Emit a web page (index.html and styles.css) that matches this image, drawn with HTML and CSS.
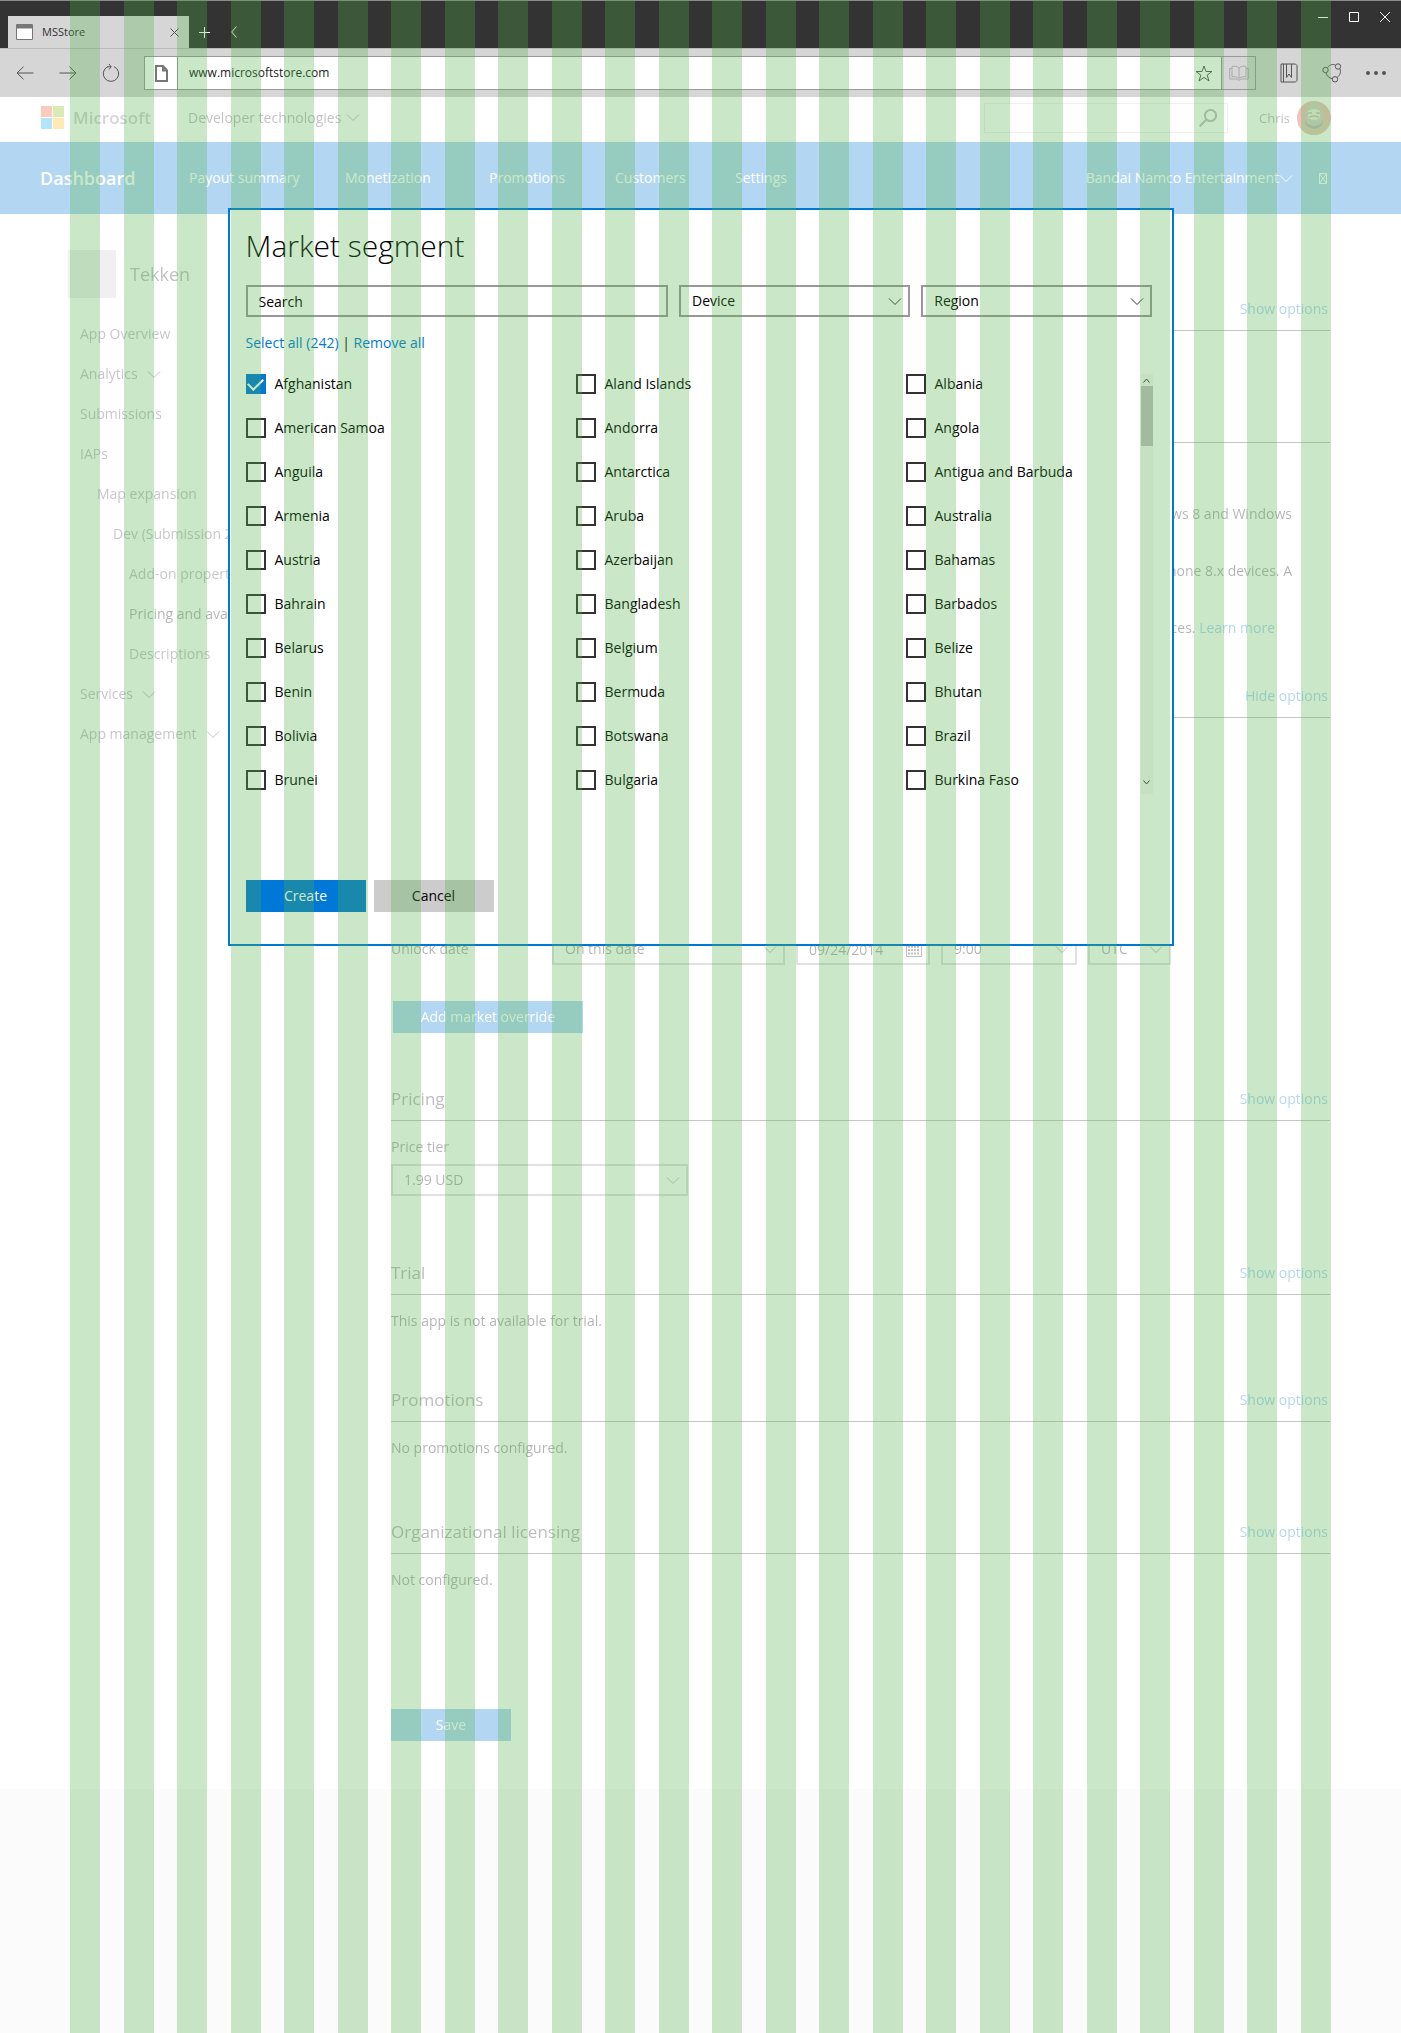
FILE: index.html
```html
<!DOCTYPE html>
<html lang="en">
<head>
<meta charset="utf-8">
<meta name="viewport" content="width=device-width, initial-scale=1">
<title>MSStore</title>
<link rel="stylesheet" href="styles.css">
</head>
<body>
<svg class="defs" aria-hidden="true">
  <symbol id="chevron" viewBox="0 0 14 9"><path d="M1 1.500l6 6 6-6"/></symbol>
</svg>

<div class="browser">
  <div class="titlebar">
    <div class="tab">
      <svg class="tab-icon" viewBox="0 0 17 16"><path d="M.5.5h16v15H.5z" fill="#fff" stroke="#777"/><path d="M1 1h15v3.500H1z" fill="#777"/></svg>
      <span class="tab-title">MSStore</span>
      <button class="icon-btn tab-close" aria-label="Close tab"><svg width="9" height="9" viewBox="0 0 9 9"><path d="M.5.5l8 8M8.500.5l-8 8"/></svg></button>
    </div>
    <button class="icon-btn light" aria-label="New tab"><svg width="11" height="11" viewBox="0 0 11 11"><path d="M5.500 0v11M0 5.500h11"/></svg></button>
    <button class="icon-btn light" aria-label="Previous tabs"><svg width="6" height="12" viewBox="0 0 6 12"><path d="M5.500.5L.7 6l4.800 5.500"/></svg></button>
    <div class="window-controls">
      <button class="icon-btn light" aria-label="Minimize"><svg width="10" height="10" viewBox="0 0 10 10"><path d="M0 5.500h10"/></svg></button>
      <button class="icon-btn light" aria-label="Maximize"><svg width="10" height="10" viewBox="0 0 10 10"><path d="M.5.5h9v9h-9z"/></svg></button>
      <button class="icon-btn light" aria-label="Close"><svg width="10" height="10" viewBox="0 0 10 10"><path d="M0 0l10 10M10 0L0 10"/></svg></button>
    </div>
  </div>
  <div class="toolbar">
    <div class="history">
      <button class="icon-btn" aria-label="Back"><svg width="18" height="14" viewBox="0 0 18 14"><path d="M17.500 7H1M7.500.7L1 7l6.500 6.300"/></svg></button>
      <button class="icon-btn" aria-label="Forward"><svg width="18" height="14" viewBox="0 0 18 14"><path d="M.5 7H17M10.500.7L17 7l-6.500 6.300"/></svg></button>
      <button class="icon-btn" aria-label="Refresh"><svg width="18" height="18" viewBox="0 0 18 18"><path d="M5.500 2.800A7.700 7.700 0 1 0 12 2.600M5 2.800h4M7 0l2.200 2.800L7 5.500"/></svg></button>
    </div>
    <div class="address">
      <span class="doc"><svg width="13" height="17" viewBox="0 0 13 17"><path d="M1 1h7l4 4.500V16H1zM8 1v4.500h4"/></svg></span>
      <input class="url" type="text" value="www.microsoftstore.com" aria-label="Address">
      <button class="icon-btn star" aria-label="Add to favorites"><svg width="18" height="17" viewBox="0 0 18 17"><path d="M9 1l2 5.500h6l-4.800 3.600L14 16l-5-3.600L4 16l1.800-5.900L1 6.500h6z"/></svg></button>
      <button class="icon-btn reading" aria-label="Reading view"><svg width="20" height="16" viewBox="0 0 20 16"><path d="M10 3C8 1 5 1 3 1.500V12c2-.6 5-.5 7 1.500 2-2 5-2.100 7-1.500V1.500C15 1 12 1 10 3zM10 3v10M3 3.500H.7V14H8l2 1.300 2-1.300h7.300V3.500H17"/></svg></button>
    </div>
    <div class="tools">
      <button class="icon-btn" aria-label="Hub"><svg width="18" height="20" viewBox="0 0 18 20"><path d="M1 1h14.500L17 2.500v15L15.500 19H1zM3.500 1v18M6.500 1v13.500L9 11l2.500 3.500V1"/></svg></button>
      <button class="icon-btn" aria-label="Share"><svg width="20" height="20" viewBox="0 0 20 20"><circle cx="3.500" cy="7" r="2.700"/><circle cx="16" cy="3.500" r="2.700"/><circle cx="13" cy="16.300" r="2.700"/><path d="M5.500 4.500C8 1.500 10.500 1 13.300 2M18 6c1 3 .4 6-2.700 8.300M4 9.700c.7 3.300 3 5.300 6.300 6"/></svg></button>
      <button class="icon-btn" aria-label="More"><svg width="20" height="4" viewBox="0 0 20 4"><g fill="#555" stroke="none"><circle cx="2" cy="2" r="2"/><circle cx="10" cy="2" r="2"/><circle cx="18" cy="2" r="2"/></g></svg></button>
    </div>
  </div>
</div>

<div class="page">
  <header class="site-header">
    <svg class="logo" viewBox="0 0 23 23"><path d="M0 0h11v11H0z" fill="#f25022"/><path d="M12 0h11v11H12z" fill="#7fba00"/><path d="M0 12h11v11H0z" fill="#00a4ef"/><path d="M12 12h11v11H12z" fill="#ffb900"/></svg>
    <span class="brand">Microsoft</span>
    <a class="site-menu" href="#">Developer technologies<svg class="chev"><use href="#chevron"/></svg></a>
    <div class="site-search">
      <input type="search" aria-label="Search site">
      <svg width="18" height="18" viewBox="0 0 18 18"><circle cx="11.500" cy="6.500" r="5.600"/><path d="M7.500 10.500L.6 17.400"/></svg>
    </div>
    <span class="user">Chris</span>
    <svg class="avatar" viewBox="0 0 34 34"><circle cx="17" cy="17" r="17" fill="#d8352a"/><path d="M1 23c3-2 5-3 8-4l16 0c3 1 5 2 8 4-3 7-9 11-16 11S4 30 1 23z" fill="#a8501c"/><path d="M8 19q0 8 9 9 9-1 9-9z" fill="#2c1c14"/><path d="M9 10C11 6 13 3 17 0c4 3 6 6 8 10l1 8c-1 5-5 7-9 7S9 23 8 18z" fill="#75694f"/><path d="M11 10q6-4 12 0l0 7q-6 4-12 0z" fill="#d3c3a2"/><path d="M11 12h4M19 12h4M12 16.500q5-3 10 0" stroke="#43382c" stroke-width="1.500"/></svg>
  </header>

  <nav class="main-nav">
    <a class="nav-title" href="#">Dashboard</a>
    <a href="#">Payout summary</a>
    <a href="#">Monetization</a>
    <a href="#">Promotions</a>
    <a href="#">Customers</a>
    <a href="#">Settings</a>
    <a class="account" href="#">Bandai Namco Entertainment<svg class="chev"><use href="#chevron"/></svg></a>
    <button class="icon-btn flag" aria-label="Notifications"><svg width="8" height="11" viewBox="0 0 8 11"><path d="M.5.5h7v10h-7zM.5.500l7 10M7.500.5l-7 10"/></svg></button>
  </nav>

  <div class="body">
    <aside class="sidebar">
      <div class="app"><span class="app-icon"></span><span class="app-name">Tekken</span></div>
      <a href="#">App Overview</a>
      <a href="#">Analytics<svg class="chev"><use href="#chevron"/></svg></a>
      <a href="#">Submissions</a>
      <a href="#">IAPs</a>
      <a class="lvl1" href="#">Map expansion</a>
      <a class="lvl2" href="#">Dev (Submission 2)</a>
      <a class="lvl3" href="#">Add-on properties</a>
      <a class="lvl3 current" href="#">Pricing and availability</a>
      <a class="lvl3" href="#">Descriptions</a>
      <a href="#">Services<svg class="chev"><use href="#chevron"/></svg></a>
      <a href="#">App management<svg class="chev"><use href="#chevron"/></svg></a>
    </aside>

    <main class="content">
      <div class="head"><a href="#">Show options</a></div>
      <div class="head second"></div>
      <div class="notes">
        <p>Windows 8 and Windows</p>
        <p>Phone 8.x devices. A</p>
        <p class="short">devices. <a href="#">Learn more</a></p>
      </div>
      <div class="head"><a href="#">Hide options</a></div>

      <div class="unlock">
        <label for="unlock">Unlock date</label>
        <div class="select when"><select id="unlock"><option>On this date</option></select><svg class="chev"><use href="#chevron"/></svg></div>
        <div class="select date"><input type="text" value="09/24/2014" aria-label="Date"><svg class="calendar" viewBox="0 0 16 16"><path d="M.5.5h15v15H.5zM0 2.500h16"/><path d="M2 6h12M2 9h12M2 12.500h12" stroke-width="2" stroke-dasharray="2 1"/></svg></div>
        <div class="select time"><select aria-label="Time"><option>9:00</option></select><svg class="chev"><use href="#chevron"/></svg></div>
        <div class="select zone"><select aria-label="Time zone"><option>UTC</option></select><svg class="chev"><use href="#chevron"/></svg></div>
      </div>
      <button class="btn primary override">Add market override</button>

      <section class="pricing">
        <div class="head"><h2>Pricing</h2><a href="#">Show options</a></div>
        <label for="tier">Price tier</label>
        <div class="select tier"><select id="tier"><option>1.99 USD</option></select><svg class="chev"><use href="#chevron"/></svg></div>
      </section>
      <section>
        <div class="head"><h2>Trial</h2><a href="#">Show options</a></div>
        <p>This app is not available for trial.</p>
      </section>
      <section>
        <div class="head"><h2>Promotions</h2><a href="#">Show options</a></div>
        <p>No promotions configured.</p>
      </section>
      <section class="licensing">
        <div class="head"><h2>Organizational licensing</h2><a href="#">Show options</a></div>
        <p>Not configured.</p>
      </section>
      <button class="btn primary save">Save</button>
    </main>
  </div>
  <footer class="footer"></footer>
</div>

<div class="dialog" role="dialog" aria-labelledby="dialog-title">
  <h1 id="dialog-title">Market segment</h1>
  <div class="filters">
    <div class="select"><input type="text" value="Search" aria-label="Search markets"></div>
    <div class="select"><select aria-label="Device"><option>Device</option></select><svg class="chev"><use href="#chevron"/></svg></div>
    <div class="select"><select aria-label="Region"><option>Region</option></select><svg class="chev"><use href="#chevron"/></svg></div>
  </div>
  <div class="bulk"><a href="#">Select all (242)</a> | <a href="#">Remove all</a></div>
  <div class="list">
    <div class="markets">
      <label><input type="checkbox" checked>Afghanistan</label>
      <label><input type="checkbox">Aland Islands</label>
      <label><input type="checkbox">Albania</label>
      <label><input type="checkbox">American Samoa</label>
      <label><input type="checkbox">Andorra</label>
      <label><input type="checkbox">Angola</label>
      <label><input type="checkbox">Anguila</label>
      <label><input type="checkbox">Antarctica</label>
      <label><input type="checkbox">Antigua and Barbuda</label>
      <label><input type="checkbox">Armenia</label>
      <label><input type="checkbox">Aruba</label>
      <label><input type="checkbox">Australia</label>
      <label><input type="checkbox">Austria</label>
      <label><input type="checkbox">Azerbaijan</label>
      <label><input type="checkbox">Bahamas</label>
      <label><input type="checkbox">Bahrain</label>
      <label><input type="checkbox">Bangladesh</label>
      <label><input type="checkbox">Barbados</label>
      <label><input type="checkbox">Belarus</label>
      <label><input type="checkbox">Belgium</label>
      <label><input type="checkbox">Belize</label>
      <label><input type="checkbox">Benin</label>
      <label><input type="checkbox">Bermuda</label>
      <label><input type="checkbox">Bhutan</label>
      <label><input type="checkbox">Bolivia</label>
      <label><input type="checkbox">Botswana</label>
      <label><input type="checkbox">Brazil</label>
      <label><input type="checkbox">Brunei</label>
      <label><input type="checkbox">Bulgaria</label>
      <label><input type="checkbox">Burkina Faso</label>
    </div>
    <div class="scrollbar">
      <svg class="arrow" viewBox="0 0 7 5"><path d="M.5 4.500l3-3.500 3 3.500"/></svg>
      <div class="thumb"></div>
      <svg class="arrow down" viewBox="0 0 7 5"><path d="M.5.5l3 3.500 3-3.500"/></svg>
    </div>
  </div>
  <div class="actions">
    <button class="btn primary">Create</button>
    <button class="btn">Cancel</button>
  </div>
</div>

<div class="columns" aria-hidden="true">
  <i></i><i></i><i></i><i></i><i></i><i></i><i></i><i></i><i></i><i></i><i></i><i></i>
  <i></i><i></i><i></i><i></i><i></i><i></i><i></i><i></i><i></i><i></i><i></i><i></i>
</div>
</body>
</html>
```
FILE: styles.css
```css
* { box-sizing: border-box; }

body {
  position: relative;
  display: flex;
  flex-direction: column;
  min-height: 100vh;
  margin: 0;
  background: #fff;
  color: #000;
  font: 14px/20px "Open Sans", "Noto Sans", sans-serif;
}

h1, h2, p { margin: 0; font-weight: 400; }
a { color: #0078d7; text-decoration: none; }
svg { flex: none; fill: none; stroke: #333; }
input, select, button { font: inherit; color: inherit; margin: 0; border-radius: 0; }
.defs { position: absolute; width: 0; height: 0; }
.chev { width: 14px; height: 9px; }

.icon-btn {
  display: flex;
  align-items: center;
  justify-content: center;
  padding: 0;
  border: 0;
  background: none;
}
.icon-btn svg { stroke: #555; }
.icon-btn.light svg { stroke: #fff; }

/* Browser window */
.titlebar {
  display: flex;
  height: 48px;
  padding-left: 8px;
  border-top: 1px solid #8a8a8a;
  background: #333;
}
.tab {
  display: flex;
  align-items: center;
  width: 181px;
  height: 32px;
  margin-top: 15px;
  padding: 0 10px 0 8px;
  background: #d6d6d6;
}
.tab-icon { width: 17px; height: 16px; stroke: none; }
.tab-title { margin-left: 9px; font-size: 11px; color: #333; }
.tab-close { margin-left: auto; }
.titlebar > .icon-btn { width: 30px; height: 32px; margin-top: 15px; }
.window-controls { display: flex; gap: 21px; height: 32px; margin-left: auto; padding-right: 11px; }

.toolbar {
  display: flex;
  align-items: center;
  height: 49px;
  padding-right: 15px;
  border-top: 1px solid #bbb;
  background: #d6d6d6;
}
.history { display: flex; align-items: center; gap: 25px; width: 144px; padding-left: 16px; }
.address { display: flex; flex: 1; height: 34px; border: 1px solid #999; background: #fff; }
.doc { display: grid; place-items: center; width: 33px; border-right: 1px solid #999; }
.doc svg { stroke: #777; stroke-width: 2; }
.url { flex: 1; min-width: 0; padding: 0 11px; border: 0; background: none; font-size: 12px; color: #222; }
.star { width: 34px; }
.reading { width: 34px; border-left: 1px solid #999; background: #d6d6d6; }
.reading svg { stroke: #aaa; }
.tools { display: flex; align-items: center; justify-content: space-between; width: 130px; padding-left: 24px; }

/* Page behind the dialog */
.page { display: flex; flex: 1; flex-direction: column; opacity: .3; }

.site-header { display: flex; align-items: center; height: 45px; padding: 0 70px 4px 41px; }
.logo { width: 23px; height: 23px; stroke: none; }
.brand { width: 115px; margin-left: 9px; font-size: 17px; font-weight: 600; color: #737373; }
.site-menu { display: flex; align-items: center; gap: 5px; color: #333; }
.site-search {
  display: flex;
  align-items: center;
  width: 244px;
  height: 30px;
  margin-left: auto;
  padding-right: 10px;
  border: 1px solid #ccc;
}
.site-search input { flex: 1; min-width: 0; border: 0; background: none; outline: 0; }
.site-search svg { stroke-width: 2; }
.user { width: 38px; margin-left: 31px; font-size: 13px; color: #333; }
.avatar { width: 34px; height: 34px; stroke: none; }

.main-nav {
  display: grid;
  grid-template-columns: 149px 156px 144px 126px 120px 80px 1fr 34px;
  align-items: center;
  height: 72px;
  padding: 0 74px 0 40px;
  background: #0078d7;
}
.main-nav a { color: #fff; }
.main-nav .nav-title { font-size: 18px; font-weight: 600; }
.account { display: flex; align-items: center; justify-content: flex-end; }
.main-nav svg { stroke: #fff; }
.main-nav .flag { justify-content: flex-end; }

.body { display: grid; grid-template-columns: 323px 1fr; padding: 0 71px 48px 68px; }

.sidebar { padding-top: 36px; }
.app { display: flex; align-items: center; gap: 14px; margin-bottom: 16px; font-size: 18px; color: #333; }
.app-icon { width: 48px; height: 48px; background: #ccc; }
.sidebar a { display: flex; align-items: center; gap: 9px; height: 40px; padding-left: 12px; color: #444; }
.sidebar .lvl1 { padding-left: 29px; }
.sidebar .lvl2 { padding-left: 45px; }
.sidebar .lvl3 { padding-left: 61px; }
.sidebar .current { color: #000; }

.content { display: flex; flex-direction: column; padding-top: 73px; }
.head {
  display: flex;
  align-items: center;
  height: 44px;
  border-bottom: 1px solid #444;
}
.head h2 { font-size: 17px; color: #222; }
.head a { margin-left: auto; padding-right: 2px; }
.head.second { margin-top: 68px; }

.notes { display: grid; gap: 37px; margin: 61px 38px 36px 0; text-align: right; }
.notes .short { padding-right: 17px; }

.unlock { display: flex; align-items: center; gap: 11px; margin-top: 215px; }
.unlock label { width: 150px; }
.when { width: 233px; }
.date { width: 134px; }
.time { width: 136px; }
.zone { width: 83px; }
.override { margin: 36px 0 0 2px; }

section { margin-top: 47px; }
.pricing { margin: 44px 0 8px; }
.licensing { margin-top: 52px; }
section > p, section > label { display: block; margin-top: 16px; }
.tier { width: 297px; margin-top: 7px; }
.save { margin-top: 119px; }
.footer { flex: 1; background: #f2f2f2; }

/* Form controls */
.select { display: grid; align-items: center; height: 32px; border: 2px solid #999; }
.select > * { grid-area: 1 / 1; }
.select select, .select input {
  width: 100%;
  height: 28px;
  padding: 0 11px;
  border: 0;
  background: none;
  appearance: none;
  outline: 0;
}
.select svg { justify-self: end; margin-right: 6px; pointer-events: none; }
.calendar { width: 16px; height: 16px; }

.btn { width: 120px; height: 32px; padding: 0; border: 0; background: #ccc; }
.btn.primary { background: #0078d7; color: #fff; }
.btn.override { width: 190px; }

/* Market dialog */
.dialog {
  position: absolute;
  top: 208px;
  right: 0;
  left: 0;
  width: 946px;
  max-width: 100%;
  margin: 0 auto;
  padding: 16px 19px 32px 16px;
  border: 2px solid #0078d7;
  background: #fff;
}
.dialog h1 { font-size: 30px; line-height: 40px; font-weight: 300; }
.filters { display: grid; grid-template-columns: 422fr 231fr 231fr; gap: 11px; margin-top: 19px; }
.bulk { margin-top: 16px; }
.list { display: flex; justify-content: space-between; height: 420px; margin-top: 21px; }
.markets {
  display: grid;
  flex: 1;
  grid-template-columns: 330px 330px 1fr;
  grid-auto-rows: 20px;
  row-gap: 24px;
}
.markets label { display: flex; align-items: center; gap: 9px; }
.markets input {
  display: grid;
  place-items: center;
  width: 20px;
  height: 20px;
  border: 2px solid #333;
  background: #fff;
  appearance: none;
}
.markets input:checked { border-color: #0078d7; background: #0078d7; }
.markets input:checked::before {
  content: "";
  width: 13px;
  height: 7px;
  margin-bottom: 4px;
  border: solid #fff;
  border-width: 0 0 2px 2px;
  transform: rotate(-45deg);
}
.scrollbar { display: flex; flex-direction: column; align-items: center; width: 12px; background: rgba(0, 0, 0, .03); }
.arrow { width: 7px; height: 5px; margin: 4px 0 3px; }
.thumb { width: 12px; height: 60px; background: #c2c2c2; }
.arrow.down { margin: auto 0 9px; }
.actions { display: flex; gap: 8px; margin-top: 86px; }

/* Layout column guides */
.columns {
  position: absolute;
  inset: 0;
  display: flex;
  justify-content: space-between;
  padding: 0 70px;
  pointer-events: none;
}
.columns i { width: 30px; background: rgba(78, 178, 72, .3); }
```
